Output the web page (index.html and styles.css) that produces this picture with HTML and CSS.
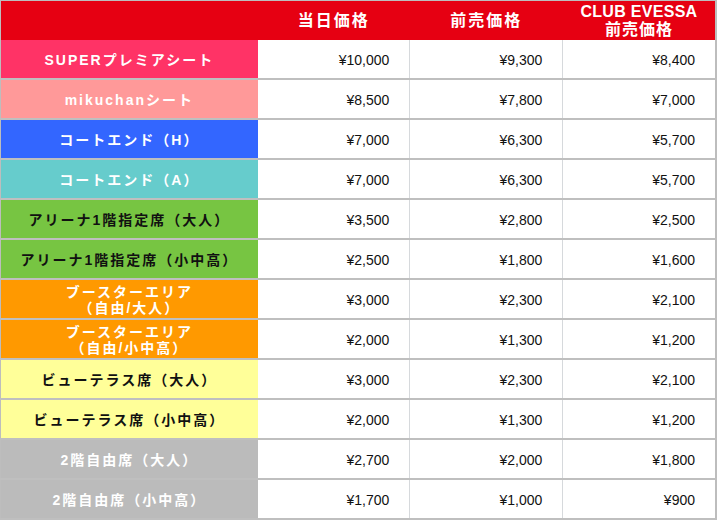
FILE: index.html
```html
<!DOCTYPE html>
<html lang="ja">
<head>
<meta charset="utf-8">
<link rel="stylesheet" href="styles.css">
</head>
<body>
<table class="price">
  <colgroup>
    <col class="c1"><col class="c2"><col class="c3"><col class="c4">
  </colgroup>
  <thead>
    <tr>
      <th></th>
      <th>当日価格</th>
      <th>前売価格</th>
      <th class="two"><span class="en">CLUB EVESSA</span><br>前売価格</th>
    </tr>
  </thead>
  <tbody>
    <tr><td class="lab super">SUPERプレミアシート</td><td class="first">¥10,000</td><td>¥9,300</td><td>¥8,400</td></tr>
    <tr><td class="lab miku">mikuchanシート</td><td class="first">¥8,500</td><td>¥7,800</td><td>¥7,000</td></tr>
    <tr><td class="lab courth">コートエンド（H）</td><td class="first">¥7,000</td><td>¥6,300</td><td>¥5,700</td></tr>
    <tr><td class="lab courta">コートエンド（A）</td><td class="first">¥7,000</td><td>¥6,300</td><td>¥5,700</td></tr>
    <tr><td class="lab arena">アリーナ1階指定席（大人）</td><td class="first">¥3,500</td><td>¥2,800</td><td>¥2,500</td></tr>
    <tr><td class="lab arena">アリーナ1階指定席（小中高）</td><td class="first">¥2,500</td><td>¥1,800</td><td>¥1,600</td></tr>
    <tr><td class="lab boost">ブースターエリア<br>（自由/大人）</td><td class="first">¥3,000</td><td>¥2,300</td><td>¥2,100</td></tr>
    <tr><td class="lab boost">ブースターエリア<br>（自由/小中高）</td><td class="first">¥2,000</td><td>¥1,300</td><td>¥1,200</td></tr>
    <tr><td class="lab view">ビューテラス席（大人）</td><td class="first">¥3,000</td><td>¥2,300</td><td>¥2,100</td></tr>
    <tr><td class="lab view">ビューテラス席（小中高）</td><td class="first">¥2,000</td><td>¥1,300</td><td>¥1,200</td></tr>
    <tr><td class="lab second">2階自由席（大人）</td><td class="first">¥2,700</td><td>¥2,000</td><td>¥1,800</td></tr>
    <tr><td class="lab second">2階自由席（小中高）</td><td class="first">¥1,700</td><td>¥1,000</td><td>¥900</td></tr>
  </tbody>
</table>
</body>
</html>
```
FILE: styles.css
```css
html, body {
  margin: 0;
  padding: 0;
  background: #ffffff;
}
body {
  font-family: "Liberation Sans", "Noto Sans CJK JP", sans-serif;
}
.price {
  border-collapse: collapse;
  table-layout: fixed;
  width: 717px;
  border-top: 1px solid #bdbdbd;
  border-left: 1px solid #bdbdbd;
  border-right: 2px solid #bdbdbd;
}
.c1 { width: 257px; }
.c2 { width: 152px; }
.c3 { width: 153px; }
.c4 { width: 153px; }
.price th {
  background: #e60012;
  color: #ffffff;
  font-weight: bold;
  font-size: 16px;
  height: 39px;
  padding: 0;
  text-align: center;
  line-height: 18px;
  letter-spacing: 2px;
}
.price th.two {
  letter-spacing: 1px;
  padding-top: 1px;
  height: 38px;
}
.price th .en {
  letter-spacing: 0.3px;
}
.price td {
  height: 36px;
  padding: 2px 20px 0 0;
  border-bottom: 2px solid #bfbfbf;
  border-left: 1px solid #d6d9dc;
  text-align: right;
  font-size: 14px;
  color: #111111;
  line-height: 16px;
}
.price td.first {
  border-left: none;
}
.price td.lab {
  border-left: none;
  padding: 2px 0 0 0;
  text-align: center;
  font-weight: bold;
  color: #ffffff;
  letter-spacing: 2px;
  font-size: 14px;
}
.super { background: #ff3366; }
.miku { background: #ff9999; }
.courth { background: #3366ff; }
.courta { background: #66cccc; }
.arena { background: #77c542; }
.boost { background: #ff9900; }
.price td.view { background: #ffff99; color: #111111; }
.second { background: #bbbbbb; }
.price td.arena { color: #111111; }
```
